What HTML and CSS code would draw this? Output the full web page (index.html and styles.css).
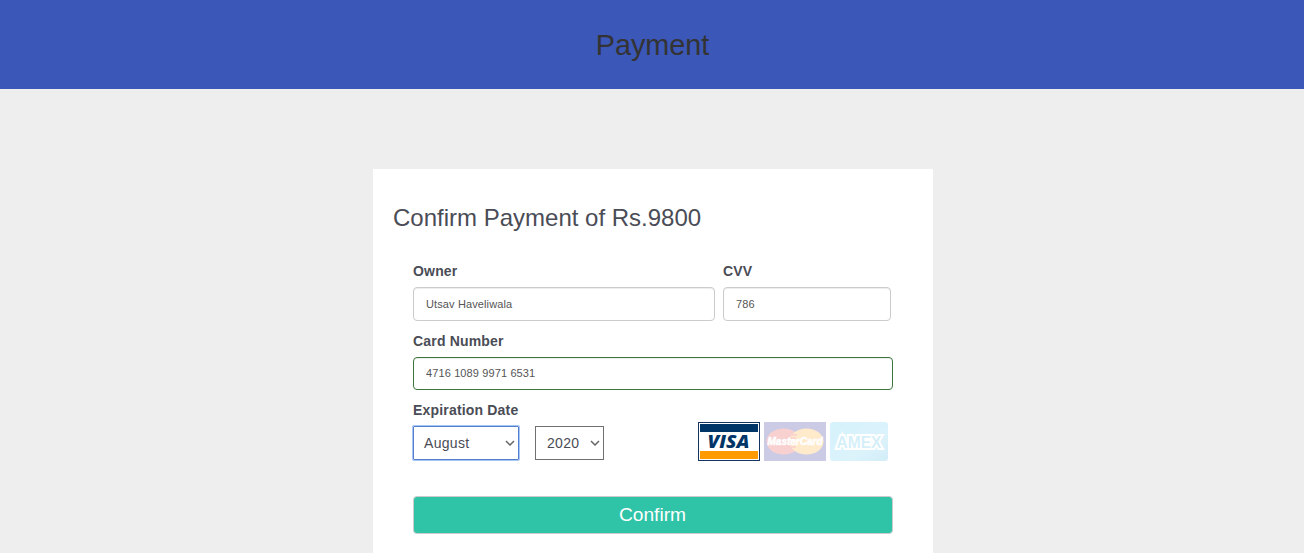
FILE: index.html
```
<!DOCTYPE html>
<html lang="en">
<head>
<meta charset="utf-8">
<title>Payment</title>
<link rel="stylesheet" href="styles.css">
</head>
<body>
<header class="header">Payment</header>
<main class="card">
  <h1 class="title">Confirm Payment of Rs.9800</h1>
  <form class="form">
    <div class="row">
      <div class="group owner"><label class="label" for="owner">Owner</label><input class="input" id="owner" type="text" value="Utsav Haveliwala"></div>
      <div class="group cvv"><label class="label" for="cvv">CVV</label><input class="input" id="cvv" type="text" value="786"></div>
    </div>
    <div class="group number"><label class="label" for="number">Card Number</label><input class="input valid" id="number" type="text" value="4716 1089 9971 6531"></div>
    <div class="expiry">
      <div class="group">
        <span class="label">Expiration Date</span>
        <div class="selects">
          <div class="select month focused"><span>August</span><svg class="chevron" viewBox="0 0 10 6"><path d="M1 1l4 4 4-4"/></svg></div>
          <div class="select year"><span>2020</span><svg class="chevron" viewBox="0 0 10 6"><path d="M1 1l4 4 4-4"/></svg></div>
        </div>
      </div>
      <div class="cards">
        <svg class="logo" width="62" height="39" viewBox="0 0 62 39">
          <rect x=".5" y=".5" width="61" height="38" fill="#fff" stroke="#173461"/>
          <rect x="2" y="2" width="58" height="8" fill="#003567"/>
          <rect x="2" y="29" width="58" height="8" fill="#ff9a00"/>
          <text class="visa" x="30.500" y="25.500" text-anchor="middle" textLength="42" lengthAdjust="spacingAndGlyphs">VISA</text>
        </svg>
        <svg class="logo faded" width="62" height="39" viewBox="0 0 62 39">
          <rect width="62" height="39" fill="#000080"/>
          <ellipse cx="19.500" cy="19.500" rx="17" ry="13" fill="#e01818"/>
          <ellipse cx="42.500" cy="19.500" rx="17" ry="13" fill="#ff9900"/>
          <path d="M28 13h5M27 16h5M26 19h5M26 22h5M27 25h5" stroke="#e01818" stroke-width="1.500"/>
          <text class="mastercard" x="31" y="23" text-anchor="middle" textLength="55" lengthAdjust="spacingAndGlyphs">MasterCard</text>
        </svg>
        <svg class="logo faded" width="58" height="39" viewBox="0 0 58 39">
          <defs><linearGradient id="sky" x2="1" y2="1"><stop offset="0" stop-color="#35c0ec"/><stop offset=".65" stop-color="#52c4ec"/><stop offset="1" stop-color="#25a9df"/></linearGradient></defs>
          <rect width="58" height="39" rx="3" fill="url(#sky)"/>
          <text class="amex" x="29" y="25.500" text-anchor="middle" textLength="45" lengthAdjust="spacingAndGlyphs">AMEX</text>
        </svg>
      </div>
    </div>
    <button class="confirm" type="button">Confirm</button>
  </form>
</main>
</body>
</html>
```
FILE: styles.css
```
* { box-sizing: border-box; }
html { height: 100%; }
body { display: flex; flex-direction: column; height: 100%; margin: 0; background: #eee; color: #4a4c56; font-family: "Liberation Sans", Arial, sans-serif; }
.header { flex: none; height: 89px; padding-left: 1px; line-height: 90px; text-align: center; font-size: 28.8px; color: #333; background: #3b57b7; }
.card { flex: 1; width: 560px; margin: 80px 0 0 373px; padding: 35px 20px 0; background: #fff; }
.title { margin: 0; font-size: 24px; font-weight: 400; line-height: 28px; }
.form { padding: 29px 20px 0; }
.row { display: flex; gap: 8px; height: 70px; }
.group { display: flex; flex-direction: column; }
.owner { width: 302px; }
.cvv { width: 168px; }
.number { height: 69px; }
.label { height: 26px; line-height: 20px; font-size: 14px; font-weight: 700; letter-spacing: .18px; }
.input { width: 100%; height: 34px; padding: 0 12px; border: 1px solid #ccc; border-radius: 4px; background: #fff; color: #555; font: 11px "Liberation Sans", Arial, sans-serif; letter-spacing: .12px; outline: none; box-shadow: inset 0 1px 1px rgba(0, 0, 0, .075); }
.valid { height: 33px; padding-bottom: 1px; border-color: #3c763d; }
.expiry { display: flex; justify-content: space-between; height: 96px; }
.selects { display: flex; gap: 16px; }
.select { display: flex; align-items: center; justify-content: space-between; height: 34px; border: 1px solid #707070; font-size: 14px; letter-spacing: .3px; }
.month { width: 106px; padding: 0 3px 0 10px; }
.year { width: 69px; padding: 0 3px 0 11px; }
.focused { border-color: #5480cb; border-radius: 1px; box-shadow: 0 0 0 1px #a8c6f5; }
.chevron { width: 10px; height: 6px; fill: none; stroke: #666; stroke-width: 1.5; }
.cards { display: flex; gap: 4px; padding: 22px 5px 0 0; }
.logo { display: block; }
.faded { opacity: .2; }
.visa { font: italic 800 17px "Open Sans", "Liberation Sans", sans-serif; fill: #003567; }
.mastercard { font: italic 700 10px "Liberation Sans", sans-serif; fill: #fff; stroke: #fff; stroke-width: .5px; }
.amex { font: 700 16px "Liberation Sans", sans-serif; fill: #35b5e5; stroke: #fff; stroke-width: 4px; stroke-linejoin: miter; paint-order: stroke; }
.confirm { display: block; width: 480px; height: 38px; padding: 0 1px 0 0; border: 1px solid #ccc; border-radius: 4px; background: #2fc4a8; color: #fff; font: 19.2px "Liberation Sans", Arial, sans-serif; }
```
